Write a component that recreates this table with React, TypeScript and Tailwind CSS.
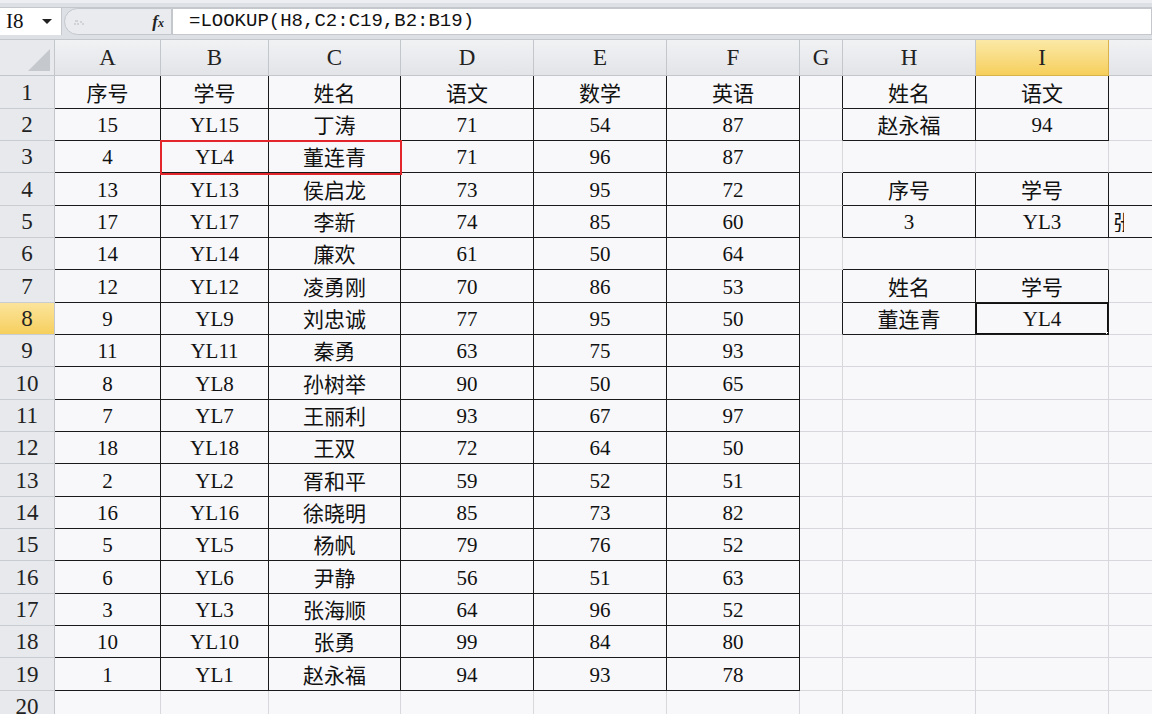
import React from 'react';

const COLS = ['A', 'B', 'C', 'D', 'E', 'F', 'G', 'H', 'I', 'J'];
const COL_W = [
  'w-[106px]',
  'w-[108px]',
  'w-[132px]',
  'w-[133px]',
  'w-[133px]',
  'w-[133px]',
  'w-[43px]',
  'w-[133px]',
  'w-[133px]',
  'w-[133px]',
];

const MAIN: string[][] = [
  ['序号', '学号', '姓名', '语文', '数学', '英语'],
  ['15', 'YL15', '丁涛', '71', '54', '87'],
  ['4', 'YL4', '董连青', '71', '96', '87'],
  ['13', 'YL13', '侯启龙', '73', '95', '72'],
  ['17', 'YL17', '李新', '74', '85', '60'],
  ['14', 'YL14', '廉欢', '61', '50', '64'],
  ['12', 'YL12', '凌勇刚', '70', '86', '53'],
  ['9', 'YL9', '刘忠诚', '77', '95', '50'],
  ['11', 'YL11', '秦勇', '63', '75', '93'],
  ['8', 'YL8', '孙树举', '90', '50', '65'],
  ['7', 'YL7', '王丽利', '93', '67', '97'],
  ['18', 'YL18', '王双', '72', '64', '50'],
  ['2', 'YL2', '胥和平', '59', '52', '51'],
  ['16', 'YL16', '徐晓明', '85', '73', '82'],
  ['5', 'YL5', '杨帆', '79', '76', '52'],
  ['6', 'YL6', '尹静', '56', '51', '63'],
  ['3', 'YL3', '张海顺', '64', '96', '52'],
  ['10', 'YL10', '张勇', '99', '84', '80'],
  ['1', 'YL1', '赵永福', '94', '93', '78'],
];

// lookup tables on the right: row -> [H, I, J]
const SIDE: Record<number, string[]> = {
  1: ['姓名', '语文'],
  2: ['赵永福', '94'],
  4: ['序号', '学号', '姓名'],
  5: ['3', 'YL3', '张海顺'],
  7: ['姓名', '学号'],
  8: ['董连青', 'YL4'],
};

// which cells carry a black outline
function inTable(r: number, c: number) {
  if (r >= 1 && r <= 19 && c >= 0 && c <= 5) return true;
  if ((r === 1 || r === 2 || r === 7 || r === 8) && (c === 7 || c === 8)) return true;
  if ((r === 4 || r === 5) && c >= 7 && c <= 9) return true;
  return false;
}

function cellText(r: number, c: number) {
  if (r >= 1 && r <= 19 && c <= 5) return MAIN[r - 1][c];
  if (c >= 7 && SIDE[r]) return SIDE[r][c - 7] ?? '';
  return '';
}

const isCjk = (s: string) => /[\u4e00-\u9fff]/.test(s);

function Cell({ r, c }: { r: number; c: number }) {
  const text = cellText(r, c);
  const black = inTable(r, c);
  const blackRight = black || inTable(r, c + 1);
  const blackBottom = black || inTable(r + 1, c);
  const selected = r === 8 && c === 8;
  // J column text runs off the window edge
  const offEdge = c === 9;

  return (
    <div
      className={`relative shrink-0 h-full flex items-center overflow-hidden whitespace-nowrap bg-[#f8f8fa] border-r border-b ${COL_W[c]} ${
        blackRight ? 'border-r-[#1a1a1a]' : 'border-r-[#d8d8dc]'
      } ${blackBottom ? 'border-b-[#1a1a1a]' : 'border-b-[#d8d8dc]'} ${
        offEdge ? 'justify-start pl-[4px]' : 'justify-center'
      }`}
    >
      {text && !(offEdge && r === 4) && (
        <span
          className={`${
            isCjk(text)
              ? "font-['Noto_Sans_CJK_SC',sans-serif] text-[21px] text-[#111] leading-none"
              : "font-['Liberation_Serif',serif] text-[21px] text-[#111] leading-none pt-[2px]"
          } ${offEdge ? 'inline-block w-[11px] overflow-hidden' : ''}`}
        >
          {text}
        </span>
      )}
      {selected && (
        <>
          <div className="absolute -left-px -top-px -right-px -bottom-px border-2 border-[#111]" />
          <div className="absolute -right-[4px] -bottom-[4px] w-[6px] h-[6px] bg-[#111] border border-white" />
        </>
      )}
    </div>
  );
}

function RowHeader({ n, active }: { n: number; active?: boolean }) {
  return (
    <div
      className={`shrink-0 w-[55px] h-full flex items-center justify-center pt-[2px] border-r border-b border-r-[#c3c6cb] border-b-[#c9ccd1] font-['Liberation_Serif',serif] text-[23px] text-[#222] ${
        active ? 'bg-gradient-to-b from-[#fbe49a] to-[#f6cf5c]' : 'bg-[#e7e9ed]'
      }`}
    >
      {n}
    </div>
  );
}

export default function App() {
  const rows = Array.from({ length: 20 }, (_, i) => i + 1);

  return (
    <div className="relative w-[1152px] h-[714px] overflow-hidden bg-[#f8f8fa] select-none">
      {/* top strip */}
      <div className="h-[8px] bg-[#dde0e4] border-t-[3px] border-t-[#eceef1] border-b border-b-[#c4c7cc]" />

      {/* formula bar */}
      <div className="h-[27px] flex bg-[#dde0e4]">
        <div className="w-[62px] shrink-0 flex items-center bg-white border-r border-[#c4c7cc] pl-[6px]">
          <span className="font-['Liberation_Serif',serif] text-[21px] text-[#111] leading-none">I8</span>
          <svg width="10" height="6" viewBox="0 0 10 6" className="ml-[18px]">
            <path d="M0 0 L10 0 L5 5 Z" fill="#222" />
          </svg>
        </div>
        <div className="w-[108px] shrink-0 flex items-center justify-between bg-[#e9ebee] rounded-l-[14px] border border-[#c4c7cc] ml-[2px] pl-[8px] pr-[7px]">
          <svg width="12" height="8" viewBox="0 0 12 8">
            <path d="M1 6 h2 M4 6 h2 M2 3 h3 M7 4 h2 M9 6 h2" stroke="#b6b9be" strokeWidth="1" />
          </svg>
          <span className="font-['Liberation_Serif',serif] italic font-bold text-[17px] text-[#222] leading-none">
            f<span className="text-[12px]">x</span>
          </span>
        </div>
        <div className="flex-1 flex items-center bg-white border border-[#c4c7cc] pl-[16px]">
          <span className="font-['Liberation_Mono',monospace] text-[19px] text-[#111] leading-none">
            =LOOKUP(H8,C2:C19,B2:B19)
          </span>
        </div>
      </div>

      <div className="h-[5px] bg-[#dde0e4] border-b border-[#c4c7cc]" />

      {/* column headers */}
      <div className="flex h-[36px]">
        <div className="shrink-0 w-[55px] h-full flex items-end justify-end bg-[#e7e9ed] border-r border-b border-[#c3c6cb] p-[4px]">
          <svg width="22" height="22" viewBox="0 0 22 22">
            <path d="M22 0 L22 22 L0 22 Z" fill="#c5c8cd" />
          </svg>
        </div>
        {COLS.map((col, c) => (
          <div
            key={col}
            className={`shrink-0 h-full flex items-center justify-center pt-[2px] border-r border-b font-['Liberation_Serif',serif] text-[23px] text-[#222] ${COL_W[c]} ${
              col === 'I'
                ? 'bg-gradient-to-b from-[#fbe9a6] to-[#f6cf5a] border-r-[#d9b24a] border-b-[#d9b24a]'
                : 'bg-gradient-to-b from-[#f1f2f4] to-[#e2e4e8] border-r-[#c3c6cb] border-b-[#c3c6cb]'
            }`}
          >
            {col === 'J' ? '' : col}
          </div>
        ))}
      </div>

      {/* grid */}
      {rows.map((r) => (
        <div key={r} className={`flex ${r % 3 === 1 ? 'h-[33px]' : 'h-[32px]'}`}>
          <RowHeader n={r} active={r === 8} />
          {COLS.map((col, c) => (
            <Cell key={col} r={r} c={c} />
          ))}
        </div>
      ))}

      {/* red highlight around B3:C3 */}
      <div className="absolute left-[160px] top-[140px] w-[242px] h-[35px] border-2 border-[#e3262b] pointer-events-none" />
    </div>
  );
}
